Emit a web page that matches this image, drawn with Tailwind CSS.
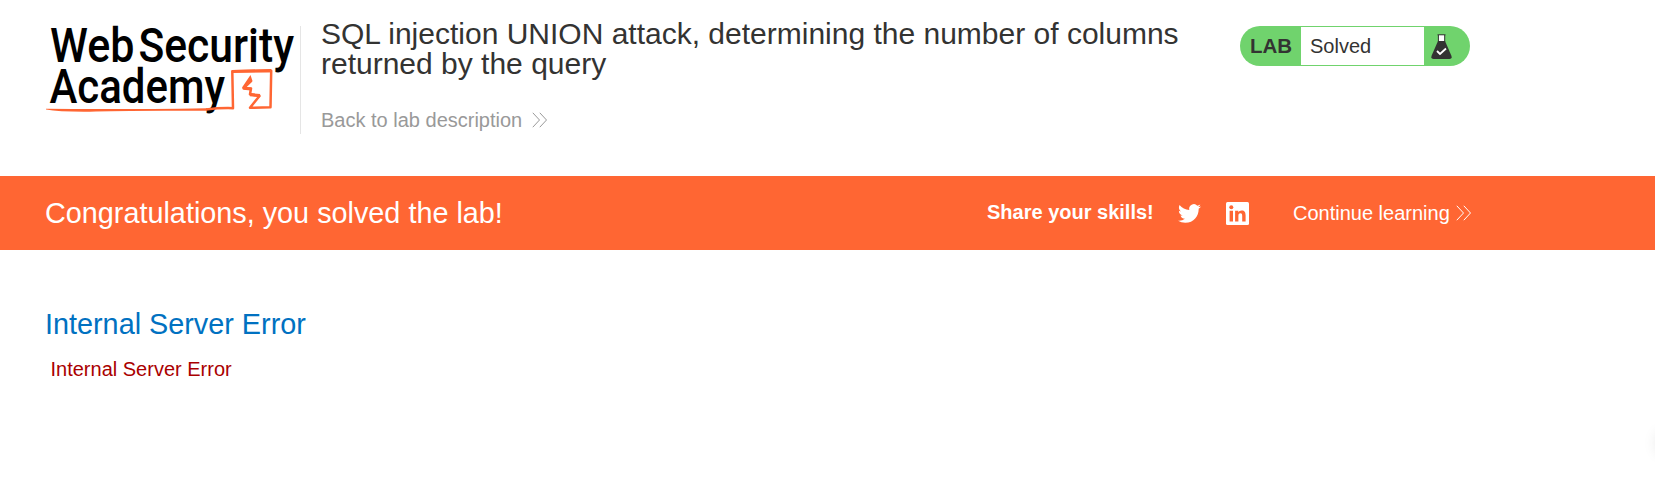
<!DOCTYPE html>
<html lang="en">
<head>
<meta charset="utf-8">
<title>SQL injection UNION attack</title>
<script src="https://cdn.jsdelivr.net/npm/@tailwindcss/browser@4"></script>
</head>
<body class="relative h-[496px] overflow-hidden bg-white font-['Liberation_Sans',Arial,sans-serif] text-[20px] whitespace-nowrap text-[#333332]">
<header class="flex h-[176px] items-start pl-[45px]">
  <svg class="mt-[10px] h-[110px] w-[255px] shrink-0 overflow-visible" viewBox="45 10 255 110" role="img" aria-label="Web Security Academy">
    <g font-family="Roboto" font-weight="500" font-size="48" fill="#000">
      <text x="50" y="61.7" textLength="84.5" lengthAdjust="spacingAndGlyphs">Web</text>
      <text x="138.5" y="61.7" textLength="155.5" lengthAdjust="spacingAndGlyphs">Security</text>
      <text x="49.5" y="102.8" textLength="175.5" lengthAdjust="spacingAndGlyphs">Academy</text>
    </g>
    <g fill="none" stroke="#ff6633" stroke-linejoin="round">
      <path stroke-width="2.5" d="M206 109.5Q220 107.8 233 108.2L232.3 71.3L271.2 70.7L270.5 107.3L250 107.8L259.5 96L250 94.3L251 88.5L243.5 88.3L251.5 80.5"/>
      <path stroke-width="3.2" d="M232.3 71.5L271.2 70.6M243.5 88.2L251 89M250 94.6L260 95.6"/>
    </g>
    <path fill="#ff6633" d="M46 108.8Q120 109.6 207 108.2V110.8Q120 110.3 90 111.7Q60 112 46 109.5ZM250.5 75L252.5 81L244 89L242 87.5Z"/>
  </svg>
  <div class="mt-[26px] h-[108px] w-px shrink-0 bg-[#e5e5e5]"></div>
  <div class="ml-[20px] w-[919px] shrink-0 pt-[19px]">
    <h1 class="text-[30px] leading-[30px]">SQL injection UNION attack, determining the number of columns<br>returned by the query</h1>
    <a class="mt-[29px] flex items-center text-[#999] leading-[24px]">Back to lab description
      <svg class="ml-[10px] h-[16px] w-[16px]" viewBox="0 0 16 16" fill="none" stroke="#999"><path d="M.8.8 7.5 8 .8 15.2M7.8.8 14.5 8 7.8 15.2"/></svg>
    </a>
  </div>
  <div class="mt-[26px] flex h-[40px] w-[230px] items-stretch overflow-hidden rounded-full bg-[#70d36d] py-px">
    <div class="w-[61px] pl-[10px] text-[20.5px] font-bold leading-[38px]">LAB</div>
    <div class="w-[123px] bg-white pl-[9px] leading-[38px]">Solved</div>
    <svg class="mt-[7px] ml-[7px] h-[26px] w-[21px]" viewBox="0 0 21 26"><path fill="#333332" d="M7 7h7L20.3 21.5q1.2 3.5-1.8 3.5h-16Q-.5 25 .7 21.500Z"/><path fill="#fff" d="M7.600 1h6v6h-6Z"/><path fill="none" stroke="#333332" d="M6.500.8h8M7.400 1v7M13.700 1v7"/><path fill="none" stroke="#fff" stroke-width="1.8" d="m6 17 3 3 6-5.500"/></svg>
  </div>
</header>
<section class="flex h-[74px] items-center bg-[#ff6633] pl-[45px] text-white">
  <p class="w-[942px] text-[28.8px] leading-[34px]">Congratulations, you solved the lab!</p>
  <p class="w-[191px] pb-[2px] font-bold leading-[24px]">Share your skills!</p>
  <svg class="h-[23px] w-[23px]" viewBox="0 0 24 24" fill="#fff"><path d="M23.953 4.57a10 10 0 01-2.825.775 4.958 4.958 0 002.163-2.723c-.951.555-2.005.959-3.127 1.184a4.92 4.92 0 00-8.384 4.482C7.69 8.095 4.067 6.13 1.64 3.162a4.822 4.822 0 00-.666 2.475c0 1.71.87 3.213 2.188 4.096a4.904 4.904 0 01-2.228-.616v.06a4.923 4.923 0 003.946 4.827 4.996 4.996 0 01-2.212.085 4.936 4.936 0 004.604 3.417 9.867 9.867 0 01-6.102 2.105c-.39 0-.779-.023-1.17-.067a13.995 13.995 0 007.557 2.209c9.053 0 13.998-7.496 13.998-13.985 0-.21 0-.42-.015-.63A9.935 9.935 0 0024 4.59z"/></svg>
  <svg class="ml-[25px] h-[23px] w-[23px]" viewBox="0 0 23 23"><rect width="23" height="23" rx="1.5" fill="#fff"/><path fill="#ff6633" d="M3.6 8.7H7v10.8H3.6ZM9.1 8.7h3.200v1.500c.7-1.100 1.800-1.800 3.300-1.800 3.200 0 4 2 4 5v6.100h-3.400v-5.500c0-1.600-.2-2.800-1.800-2.800-1.500 0-2 1.100-2 2.700v5.600H9.100Z"/><circle cx="5.3" cy="5.3" r="2" fill="#ff6633"/></svg>
  <a class="ml-[44px] flex items-center leading-[24px]">Continue learning
    <svg class="ml-[6px] h-[16px] w-[16px]" viewBox="0 0 16 16" fill="none" stroke="#fff"><path d="M.8.8 7.500 8 .8 15.200M7.800.8 14.500 8 7.800 15.200"/></svg>
  </a>
</section>
<main class="pt-[57px] pl-[45px]">
  <h2 class="text-[28.8px] leading-[34px] text-[#0071c1]">Internal Server Error</h2>
  <p class="mt-[16px] pl-[5.500px] leading-[24px] text-[#aa0000]">Internal Server Error</p>
</main>
<div class="absolute top-[433px] left-[1658px] h-[20px] w-[20px] rounded-full shadow-[0_0_16px_rgba(0,0,0,0.16)]"></div>
</body>
</html>
